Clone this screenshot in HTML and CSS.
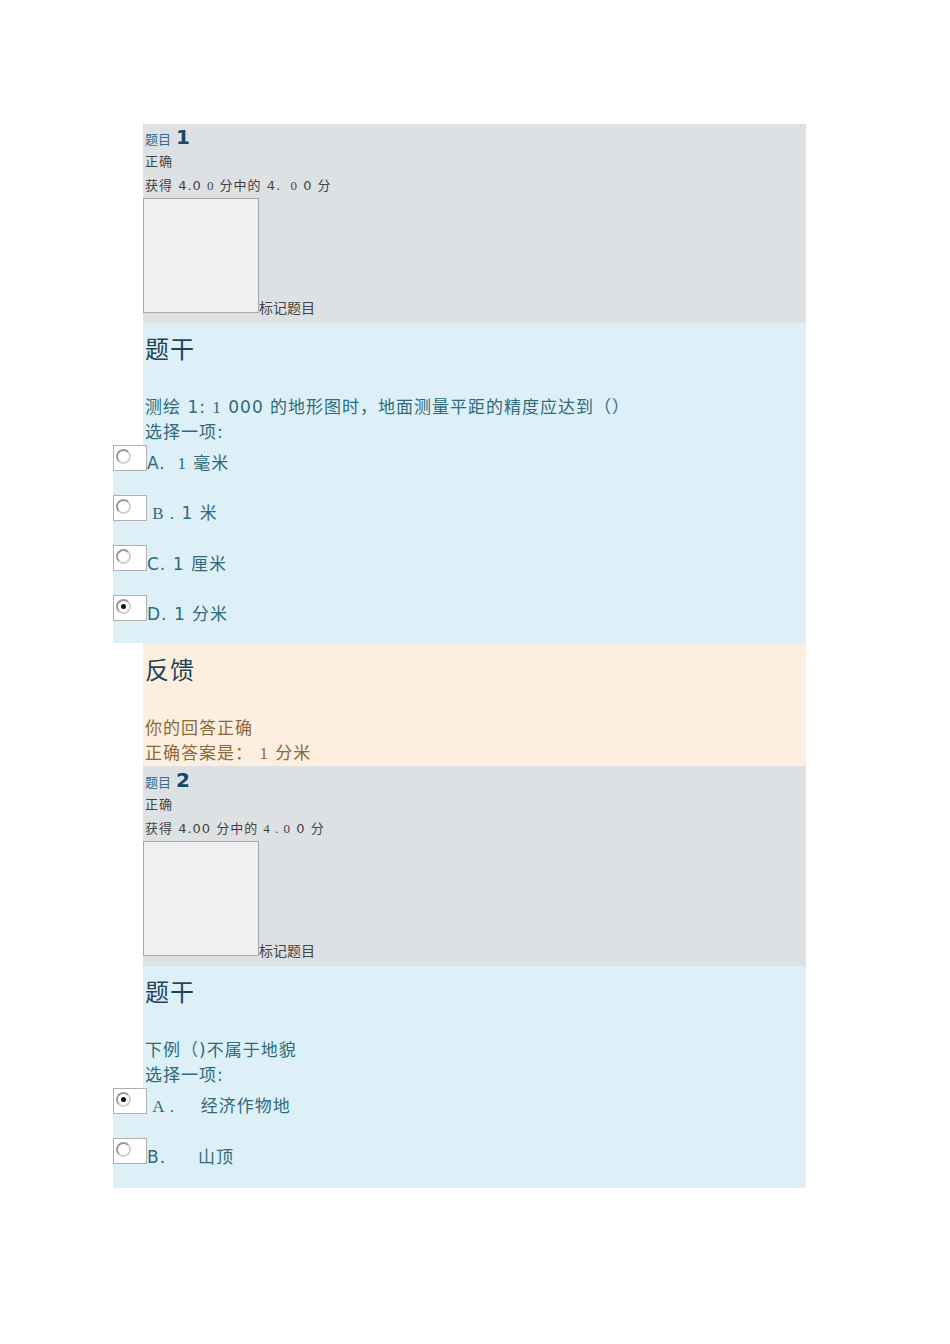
FILE: index.html
```html
<!DOCTYPE html>
<html lang="zh-CN">
<head>
<meta charset="utf-8">
<title>测验</title>
<link rel="stylesheet" href="styles.css">
</head>
<body>
<div class="page">

  <div class="que">
    <div class="info">
      <div class="qno"><span class="qlabel">题目</span> <span class="qnum">1</span></div>
      <div class="state">正确</div>
      <div class="grade">获得 4.0 <span class="serif">0</span> 分中的 4. <span class="serif">&nbsp;0</span> 0 分</div>
      <div class="flagrow"><span class="flagbox"></span><span class="flagtext">标记题目</span></div>
    </div>
    <div class="formulation">
      <div class="qtext">
        <h4 class="heading">题干</h4>
        <div class="text">测绘 1: <span class="serif">1</span> 000 的地形图时，地面测量平距的精度应达到（）</div>
        <div class="text">选择一项:</div>
      </div>
      <div class="answer">
        <div class="opt"><span class="rbox"><span class="radio"></span></span><span class="olabel">A. <span class="serif">&nbsp;1</span> 毫米</span></div>
        <div class="opt"><span class="rbox"><span class="radio"></span></span><span class="olabel"><span class="serif">&nbsp;B .</span> 1 米</span></div>
        <div class="opt"><span class="rbox"><span class="radio"></span></span><span class="olabel">C. 1 厘米</span></div>
        <div class="opt last"><span class="rbox"><span class="radio on"></span></span><span class="olabel">D. 1 分米</span></div>
      </div>
    </div>
    <div class="outcome">
      <h4 class="heading">反馈</h4>
      <div class="ftext">你的回答正确</div>
      <div class="ftext">正确答案是： <span class="serif">1</span> 分米</div>
    </div>
  </div>

  <div class="que">
    <div class="info info2">
      <div class="qno"><span class="qlabel">题目</span> <span class="qnum">2</span></div>
      <div class="state">正确</div>
      <div class="grade">获得 4.00 分中的 <span class="serif">4 . 0</span> 0 分</div>
      <div class="flagrow"><span class="flagbox"></span><span class="flagtext">标记题目</span></div>
    </div>
    <div class="formulation">
      <div class="qtext">
        <h4 class="heading">题干</h4>
        <div class="text">下例（)不属于地貌</div>
        <div class="text">选择一项:</div>
      </div>
      <div class="answer answer2">
        <div class="opt"><span class="rbox"><span class="radio on"></span></span><span class="olabel"><span class="serif">&nbsp;A .</span> &nbsp;&nbsp;&nbsp;经济作物地</span></div>
        <div class="opt last"><span class="rbox"><span class="radio"></span></span><span class="olabel">B. &nbsp;&nbsp;&nbsp;&nbsp;山顶</span></div>
      </div>
    </div>
  </div>

</div>
</body>
</html>
```
FILE: styles.css
```css
html, body {
  margin: 0;
  padding: 0;
  background: #ffffff;
}

body {
  font-family: "DejaVu Sans", "Noto Sans CJK SC", sans-serif;
  color: #333333;
}

.serif {
  font-family: "Liberation Serif", "Noto Sans CJK SC", serif;
}

.page {
  width: 693px;
  margin-left: 113px;
  padding-top: 124px;
}

.info {
  margin-left: 30px;
  background: #dee1e4;
  padding: 1px 0 10px 2px;
}

.info2 {
  padding-top: 2px;
  padding-bottom: 10px;
}

.qno {
  height: 24px;
  line-height: 24px;
  margin-bottom: 1px;
}

.qlabel {
  font-size: 13px;
  color: #35708e;
}

.qnum {
  font-size: 20px;
  font-weight: bold;
  color: #174a66;
}

.state, .grade {
  font-size: 13px;
  line-height: 24px;
  color: #444444;
  letter-spacing: 1px;
}

.flagrow {
  display: flex;
  align-items: flex-end;
}

.flagbox {
  display: block;
  width: 114px;
  height: 113px;
  background: #f0f0f0;
  border: 1px solid #a9a9a9;
  margin-left: -2px;
}

.flagtext {
  font-size: 14px;
  line-height: 18px;
  color: #444444;
  margin-bottom: -4px;
}

.qtext {
  margin-left: 30px;
  background: #def0f7;
  padding: 12px 0 0 2px;
}

.heading {
  margin: 0;
  font-size: 24px;
  font-weight: normal;
  line-height: 30px;
  color: #1f4458;
  height: 30px;
  letter-spacing: 1px;
}

.qtext .heading {
  margin-bottom: 30px;
}

.text {
  font-size: 17px;
  line-height: 25px;
  color: #2f6b7c;
  letter-spacing: 1px;
}

.answer {
  background: #def0f7;
  padding-bottom: 22px;
}

.answer2 {
  padding-bottom: 24px;
}

.opt {
  display: flex;
  align-items: flex-end;
  height: 26px;
  margin-bottom: 24px;
}

.opt.last {
  margin-bottom: 0;
}

.rbox {
  display: block;
  position: relative;
  width: 32px;
  height: 24px;
  background: #ffffff;
  border: 1px solid #b0b0b0;
}

.radio {
  position: absolute;
  left: 2px;
  top: 3px;
  width: 11px;
  height: 11px;
  border-radius: 50%;
  border: 2px solid #9a9a9a;
  border-right-color: #d0d0d0;
  border-bottom-color: #d0d0d0;
  background: #ffffff;
}

.radio.on::after {
  content: "";
  position: absolute;
  left: 3px;
  top: 3px;
  width: 5px;
  height: 5px;
  border-radius: 50%;
  background: #111111;
}

.olabel {
  font-size: 17px;
  line-height: 20px;
  color: #2f6b7c;
  margin-left: 0;
  margin-bottom: -3px;
  white-space: pre;
  letter-spacing: 1px;
}

.outcome {
  margin-left: 30px;
  background: #fcefdf;
  padding: 13px 0 0 2px;
}

.outcome .heading {
  margin-bottom: 30px;
}

.ftext {
  font-size: 17px;
  line-height: 25px;
  color: #8a6a3c;
  letter-spacing: 1px;
}
```
